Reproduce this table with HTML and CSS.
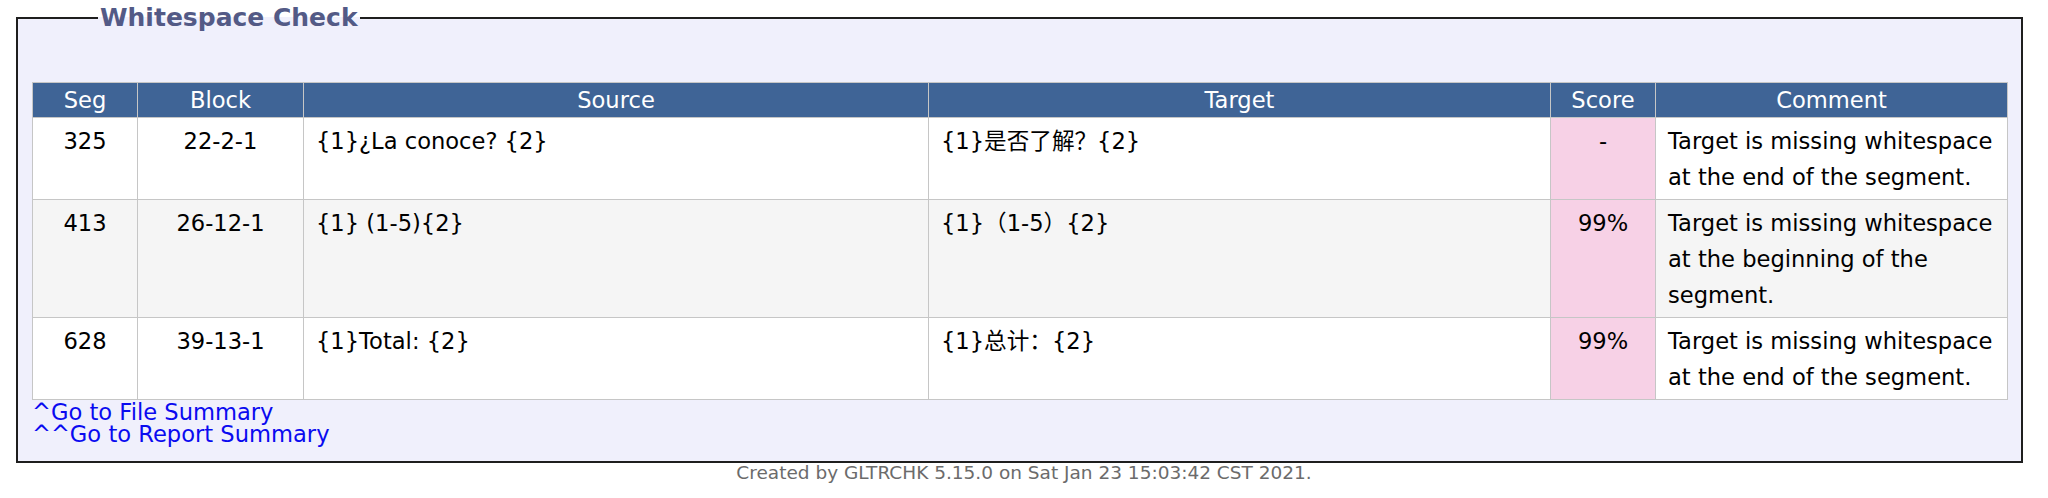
FILE: index.html
```html
<!DOCTYPE html>
<html>
<head>
<meta charset="utf-8">
<title>Whitespace Check</title>
<link rel="stylesheet" href="styles.css">
</head>
<body>
<fieldset class="section">
  <legend class="section-title">Whitespace Check</legend>
  <table class="report">
    <colgroup>
      <col class="c-seg"><col class="c-block"><col class="c-src"><col class="c-tgt"><col class="c-score"><col class="c-comment">
    </colgroup>
    <thead>
      <tr><th>Seg</th><th>Block</th><th>Source</th><th>Target</th><th>Score</th><th>Comment</th></tr>
    </thead>
    <tbody>
      <tr>
        <td class="num">325</td><td class="num">22-2-1</td>
        <td class="text">{1}¿La conoce? {2}</td>
        <td class="text">{1}是否了解？{2}</td>
        <td class="score">-</td>
        <td class="comment">Target is missing whitespace at the end of the segment.</td>
      </tr>
      <tr class="alt">
        <td class="num">413</td><td class="num">26-12-1</td>
        <td class="text">{1} (1-5){2}</td>
        <td class="text">{1}（1-5）{2}</td>
        <td class="score">99%</td>
        <td class="comment">Target is missing whitespace at the beginning of the segment.</td>
      </tr>
      <tr>
        <td class="num">628</td><td class="num">39-13-1</td>
        <td class="text">{1}Total: {2}</td>
        <td class="text">{1}总计：{2}</td>
        <td class="score">99%</td>
        <td class="comment">Target is missing whitespace at the end of the segment.</td>
      </tr>
    </tbody>
  </table>
  <div class="nav">
    <a href="#file-summary">^Go to File Summary</a><br>
    <a href="#report-summary">^^Go to Report Summary</a>
  </div>
</fieldset>
<div class="footer">Created by GLTRCHK 5.15.0 on Sat Jan 23 15:03:42 CST 2021.</div>
</body>
</html>
```
FILE: styles.css
```css
html, body {
  margin: 0;
  padding: 0;
  background: #ffffff;
}
body {
  font-family: "DejaVu Sans", "Noto Sans CJK SC", sans-serif;
  font-size: 22.6px;
  color: #000;
}
.section {
  margin: 3px 25px 0 16px;
  padding: 49px 14px 16px 14px;
  border: 2px solid #1e1e1e;
  background: #f0f0fc;
  min-width: 0;
}
.section-title {
  margin-left: 66px;
  padding: 0 2px;
  font-size: 25px;
  line-height: 30px;
  font-weight: bold;
  color: #535a86;
}
.report {
  width: 100%;
  border-collapse: collapse;
  table-layout: fixed;
  background: #ffffff;
}
.c-seg { width: 105px; }
.c-block { width: 166px; }
.c-src { width: 625px; }
.c-tgt { width: 622px; }
.c-score { width: 105px; }
.c-comment { width: 352px; }
.report th {
  background: #3f6496;
  color: #ffffff;
  font-weight: normal;
  height: 34px;
  padding: 0;
  line-height: 34px;
  border: 1px solid #c6c6c6;
  text-align: center;
}
.report td {
  border: 1px solid #c6c6c6;
  vertical-align: top;
  padding: 5px 12px 4px 12px;
  line-height: 36px;
}
.report .alt td { background: #f5f5f5; }
.report td.num { text-align: center; }
.report td.text { text-align: left; }
.report td.score,
.report .alt td.score {
  background: #f7d1e6;
  text-align: center;
}
.nav {
  margin-top: 1px;
  line-height: 22px;
}
.nav a {
  color: #0a0af0;
  text-decoration: none;
}
.footer {
  text-align: center;
  color: #6b6b6b;
  font-size: 18.5px;
  line-height: 20px;
}
```
